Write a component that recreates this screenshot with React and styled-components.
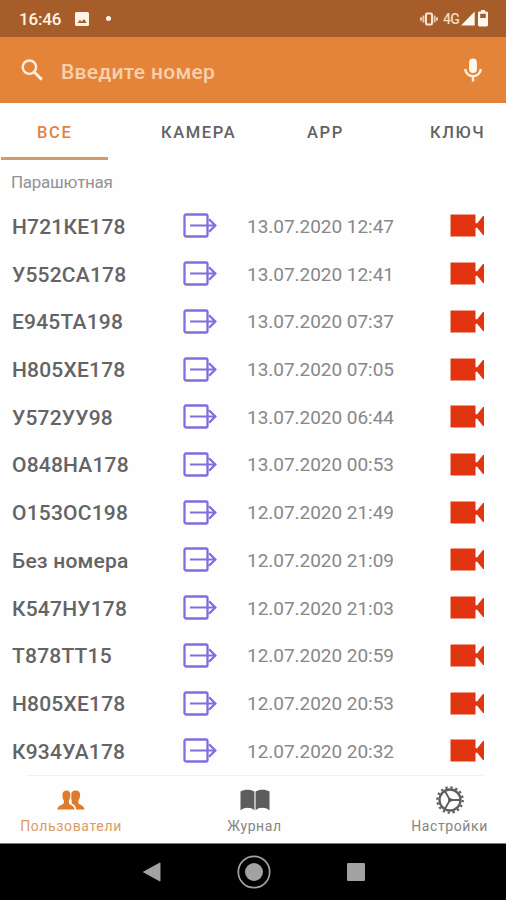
import styled, { createGlobalStyle } from 'styled-components';
import { useState } from 'react';

const GlobalStyle = createGlobalStyle`
  * {
    box-sizing: border-box;
  }

  body {
    margin: 0;
    background-color: #fefefe;
    font-family: Roboto, "Noto Sans", sans-serif;
  }
`;

const Container = styled.div`
  width: 100%;
  max-width: 506px;
  height: 900px;
  display: flex;
  flex-direction: column;
  overflow: hidden;
  background-color: #fefefe;

  svg {
    display: block;
    flex-shrink: 0;
  }
`;

const StatusBar = styled.div`
  height: 37px;
  flex-shrink: 0;
  display: flex;
  align-items: center;
  justify-content: space-between;
  padding: 0 18px 0 19px;
  background-color: #a65d29;
  color: #fff4e6;
`;

const StatusGroup = styled.div`
  display: flex;
  align-items: center;

  .time {
    width: 56px;
    font-size: 17px;
    font-weight: 500;
    line-height: 20px;
    letter-spacing: -0.2px;
  }

  .dot {
    width: 5px;
    height: 5px;
    margin-left: 17px;
    border-radius: 50%;
    background-color: #fff4e6;
  }

  .network {
    margin: 0 2px 0 5px;
    font-size: 14px;
    font-weight: 500;
    line-height: 18px;
    letter-spacing: -0.8px;
    color: #f3d9c2;
  }

  .signal {
    margin-right: 3px;
  }
`;

const SearchBar = styled.div`
  height: 66px;
  flex-shrink: 0;
  display: flex;
  align-items: center;
  padding: 0 24px 0 21px;
  background-color: #e48439;
  border-bottom: 1px solid #e0813d;

  input {
    flex: 1;
    min-width: 0;
    height: 40px;
    margin: 4px 0 0 18px;
    padding: 0;
    border: none;
    outline: none;
    background: transparent;
    color: #ffe6cf;
    font-family: inherit;
    font-size: 21px;
    font-weight: 500;
    letter-spacing: 0.3px;
  }

  input::placeholder {
    color: #fad0ac;
    opacity: 1;
  }
`;

const Tabs = styled.div`
  height: 57px;
  flex-shrink: 0;
  display: grid;
  grid-template-columns: 107px 182px 70px 147px;
  padding-left: 1px;
`;

const Tab = styled.button`
  height: 57px;
  padding: 5px 0 0 ${(props) => props.$indent}px;
  border: none;
  border-bottom: 3px solid ${(props) => (props.$active ? '#d59a68' : 'transparent')};
  background: transparent;
  color: ${(props) => (props.$active ? '#e0833f' : '#626262')};
  font-family: inherit;
  font-size: 16.5px;
  font-weight: 500;
  letter-spacing: 1.6px;
  text-align: left;
  white-space: nowrap;
`;

const Group = styled.div`
  height: 42.5px;
  flex-shrink: 0;
  padding: 12px 0 0 11px;
  color: #929292;
  font-size: 17px;
  line-height: 20px;
  letter-spacing: -0.27px;
`;

const Row = styled.div`
  height: 47.73px;
  flex-shrink: 0;
  display: grid;
  grid-template-columns: 171px 64px 202px 36px;
  align-items: center;
  padding-left: 12px;
`;

const Plate = styled.span`
  padding-top: 1px;
  color: #646464;
  font-size: 21px;
  font-weight: 500;
  line-height: 24px;
  letter-spacing: 0.2px;
  white-space: nowrap;
`;

const DateTime = styled.span`
  padding-top: 1px;
  color: #888888;
  font-size: 19px;
  line-height: 24px;
  letter-spacing: -0.03px;
  white-space: nowrap;
`;

const BottomNav = styled.div`
  flex: 1;
  display: flex;
  flex-direction: column;

  .divider {
    height: 1px;
    margin: 0 22px 0 27px;
    background-color: #f1f1f1;
  }

  .items {
    flex: 1;
    display: flex;
    justify-content: space-between;
    padding: 0 18px 0 20px;
  }
`;

const NavItem = styled.div`
  display: flex;
  flex-direction: column;
  align-items: center;
  width: ${(props) => props.$width}px;
  margin-right: ${(props) => props.$shift || 0}px;
  padding-top: 9px;
  color: ${(props) => (props.$active ? '#e07a2c' : '#5d5d5d')};

  .icon {
    height: 30px;
    display: flex;
    align-items: center;
  }

  span {
    margin-top: 2px;
    color: ${(props) => (props.$active ? '#dc9a64' : '#858585')};
    font-size: 14px;
    line-height: 18px;
    letter-spacing: ${(props) => props.$spacing}px;
    white-space: nowrap;
  }
`;

const SystemBar = styled.div`
  height: 57px;
  flex-shrink: 0;
  display: flex;
  align-items: center;
  justify-content: center;
  gap: 75px;
  padding-left: 1px;
  border-top: 1px solid #777777;
  background-color: #000;
`;

const PhotoIcon = () => (
  <svg width="14" height="14" viewBox="0 0 14 14">
    <rect width="14" height="14" rx="1.5" fill="#fff4e6" />
    <path d="M2.5 11L5 7.8l1.700 2L9 7l2.800 4z" fill="#a65d29" />
  </svg>
);

const VibrateIcon = () => (
  <svg width="18" height="14" viewBox="0 0 18 14">
    <path d="M1 5.200v3.600M17 5.200v3.600M3.400 3.500v7M14.600 3.500v7" stroke="#e9c7a8" strokeWidth="2" />
    <rect x="6" y="1.500" width="6" height="11" rx="1" fill="none" stroke="#f9e5d2" strokeWidth="2" />
  </svg>
);

const SignalIcon = () => (
  <svg className="signal" width="14" height="15" viewBox="0 0 14 15">
    <path d="M0 14.500L13.700 0.500v14z" fill="#fff8ee" />
  </svg>
);

const BatteryIcon = () => (
  <svg width="10" height="17" viewBox="0 0 10 17">
    <path
      d="M3 0h4v1.500h1.600A1.400 1.400 0 0110 2.900v12.200a1.400 1.400 0 01-1.400 1.400H1.400A1.400 1.400 0 010 15.100V2.900a1.400 1.400 0 011.400-1.400H3zM2.200 3.700v4.300h5.600V3.700z"
      fill="#fff8ee"
      fillRule="evenodd"
    />
  </svg>
);

const SearchIcon = () => (
  <svg width="22" height="22" viewBox="0 0 22 22" fill="none" stroke="#ffeedd" strokeWidth="2.400">
    <circle cx="8.400" cy="8.200" r="6.700" />
    <path d="M13.200 13l7.600 7.600" strokeWidth="3" />
  </svg>
);

const MicIcon = () => (
  <svg width="18" height="24" viewBox="0 0 18 24">
    <rect x="5.100" y="0.500" width="7.800" height="14.500" rx="3.900" fill="#fff8ee" />
    <path d="M1.300 11c0 4.300 3.300 7.200 7.700 7.200s7.700-2.900 7.700-7.200M9 18v5.500" fill="none" stroke="#ffeedd" strokeWidth="2.400" />
  </svg>
);

const ExitIcon = () => (
  <svg width="35" height="26" viewBox="0 0 35 26" fill="none" stroke="#7d6fe0" strokeWidth="2.300">
    <rect x="1.500" y="1.500" width="23" height="22" rx="1.500" />
    <path d="M7 12.500h25" strokeWidth="2" />
    <path d="M26 6.200l6.300 6.300-6.300 6.300" />
  </svg>
);

const VideoIcon = () => (
  <svg width="36" height="24" viewBox="0 0 36 24" fill="#e03510">
    <path d="M1.500 0.500h25v8.500l1.500 .5L34 2h1v19h-1L28 13.500l-1.500 .5v8.500h-25z" />
  </svg>
);

const UsersIcon = () => (
  <svg width="28" height="20" viewBox="0 0 28 20" fill="currentColor">
    <path d="M9.700 0.500c2.400 0 3.900 1.800 3.700 4.900-.1 2.200-.7 3.700-1.500 4.800v3c.3 1.500 5.400 2.200 5.800 6.300H0.300c.3-4.200 6-4.800 6.500-6.300v-3C5.900 9.100 5.500 7.600 5.400 5.400 5.200 2.300 7 .5 9.700.5z" />
    <path d="M18.900 0.500c3 0 4.400 1.800 4.200 4.900-.1 2.200-.7 3.700-1.600 4.800v3c.5 1.500 5.800 2.100 6.100 6.300h-8.400c-.2-2.900-2-4.700-4.400-5.900V10c-.7-1.100-1.100-2.500-1.100-4.600.1-3.100 2-4.900 5.200-4.900z" />
    <path d="M13.900 2.500c.4 3 .1 6-.8 8.100v3c2.900 1 5.300 2.700 5.800 5.900" fill="none" stroke="#fefefe" strokeWidth="0.700" />
  </svg>
);

const BookIcon = () => (
  <svg width="30" height="22" viewBox="0 0 30 22" fill="currentColor">
    <path d="M0.500 2.500C4.500 0 10.500 0 14.400 2.500V21.300C11 18 4.500 18 0.500 21.300z" />
    <path d="M15.600 2.500C19.500 0 25.500 0 29.500 2.500v18.800C25.500 18 19 18 15.600 21.300z" />
    <path d="M14.400 3h1.200v17.500h-1.200z" fill="#b5b5b5" />
  </svg>
);

const GearIcon = () => (
  <svg width="28" height="28" viewBox="0 0 28 28" fill="none" stroke="currentColor">
    <circle cx="14" cy="14" r="10.500" strokeWidth="2.300" />
    <circle cx="14" cy="14" r="12.700" strokeWidth="2.200" strokeDasharray="2.300 2.688" />
    <path d="M14 14h10M14 14L9 5.300M14 14L9 22.700" strokeWidth="1.800" />
    <circle cx="14" cy="14" r="2" fill="currentColor" stroke="none" />
  </svg>
);

const BackIcon = () => (
  <svg width="20" height="20" viewBox="0 0 20 20">
    <path d="M1.500 10L18 1v18z" fill="#a2a2a2" stroke="#a2a2a2" strokeLinejoin="round" />
  </svg>
);

const HomeIcon = () => (
  <svg width="34" height="34" viewBox="0 0 34 34">
    <circle cx="17" cy="17" r="15.700" fill="none" stroke="#a2a2a2" strokeWidth="1.700" />
    <circle cx="17" cy="17" r="9" fill="#a2a2a2" />
  </svg>
);

const RecentIcon = () => (
  <svg width="20" height="20" viewBox="0 0 20 20">
    <rect x="1" y="1" width="18" height="18" rx="1" fill="#a2a2a2" />
  </svg>
);

const tabs = [
  { title: 'ВСЕ', indent: 36 },
  { title: 'КАМЕРА', indent: 53 },
  { title: 'APP', indent: 17 },
  { title: 'КЛЮЧ', indent: 70 },
];

const events = [
  { plate: 'Н721КЕ178', date: '13.07.2020 12:47' },
  { plate: 'У552СА178', date: '13.07.2020 12:41' },
  { plate: 'Е945ТА198', date: '13.07.2020 07:37' },
  { plate: 'Н805ХЕ178', date: '13.07.2020 07:05' },
  { plate: 'У572УУ98', date: '13.07.2020 06:44' },
  { plate: 'О848НА178', date: '13.07.2020 00:53' },
  { plate: 'О153ОС198', date: '12.07.2020 21:49' },
  { plate: 'Без номера', date: '12.07.2020 21:09' },
  { plate: 'К547НУ178', date: '12.07.2020 21:03' },
  { plate: 'Т878ТТ15', date: '12.07.2020 20:59' },
  { plate: 'Н805ХЕ178', date: '12.07.2020 20:53' },
  { plate: 'К934УА178', date: '12.07.2020 20:32' },
];

const App = () => {
  const [search, setSearch] = useState('');
  const [active, setActive] = useState(0);

  return (
    <Container>
      <GlobalStyle />
      <StatusBar>
        <StatusGroup>
          <span className='time'>16:46</span>
          <PhotoIcon />
          <span className='dot' />
        </StatusGroup>
        <StatusGroup>
          <VibrateIcon />
          <span className='network'>4G</span>
          <SignalIcon />
          <BatteryIcon />
        </StatusGroup>
      </StatusBar>
      <SearchBar>
        <SearchIcon />
        <input
          placeholder='Введите номер'
          value={search}
          onChange={(e) => setSearch(e.target.value)}
        />
        <MicIcon />
      </SearchBar>
      <Tabs>
        {tabs.map((tab, i) => (
          <Tab key={tab.title} $active={i === active} $indent={tab.indent} onClick={() => setActive(i)}>
            {tab.title}
          </Tab>
        ))}
      </Tabs>
      <Group>Парашютная</Group>
      {events.map((event) => (
        <Row key={event.date}>
          <Plate>{event.plate}</Plate>
          <ExitIcon />
          <DateTime>{event.date}</DateTime>
          <VideoIcon />
        </Row>
      ))}
      <BottomNav>
        <div className='divider' />
        <div className='items'>
          <NavItem $active $width={102} $spacing={0.65}>
            <div className='icon'><UsersIcon /></div>
            <span>Пользователи</span>
          </NavItem>
          <NavItem $width={56} $spacing={0.6} $shift={24}>
            <div className='icon'><BookIcon /></div>
            <span>Журнал</span>
          </NavItem>
          <NavItem $width={77} $spacing={0.6}>
            <div className='icon'><GearIcon /></div>
            <span>Настройки</span>
          </NavItem>
        </div>
      </BottomNav>
      <SystemBar>
        <BackIcon />
        <HomeIcon />
        <RecentIcon />
      </SystemBar>
    </Container>
  );
};

export default App;
